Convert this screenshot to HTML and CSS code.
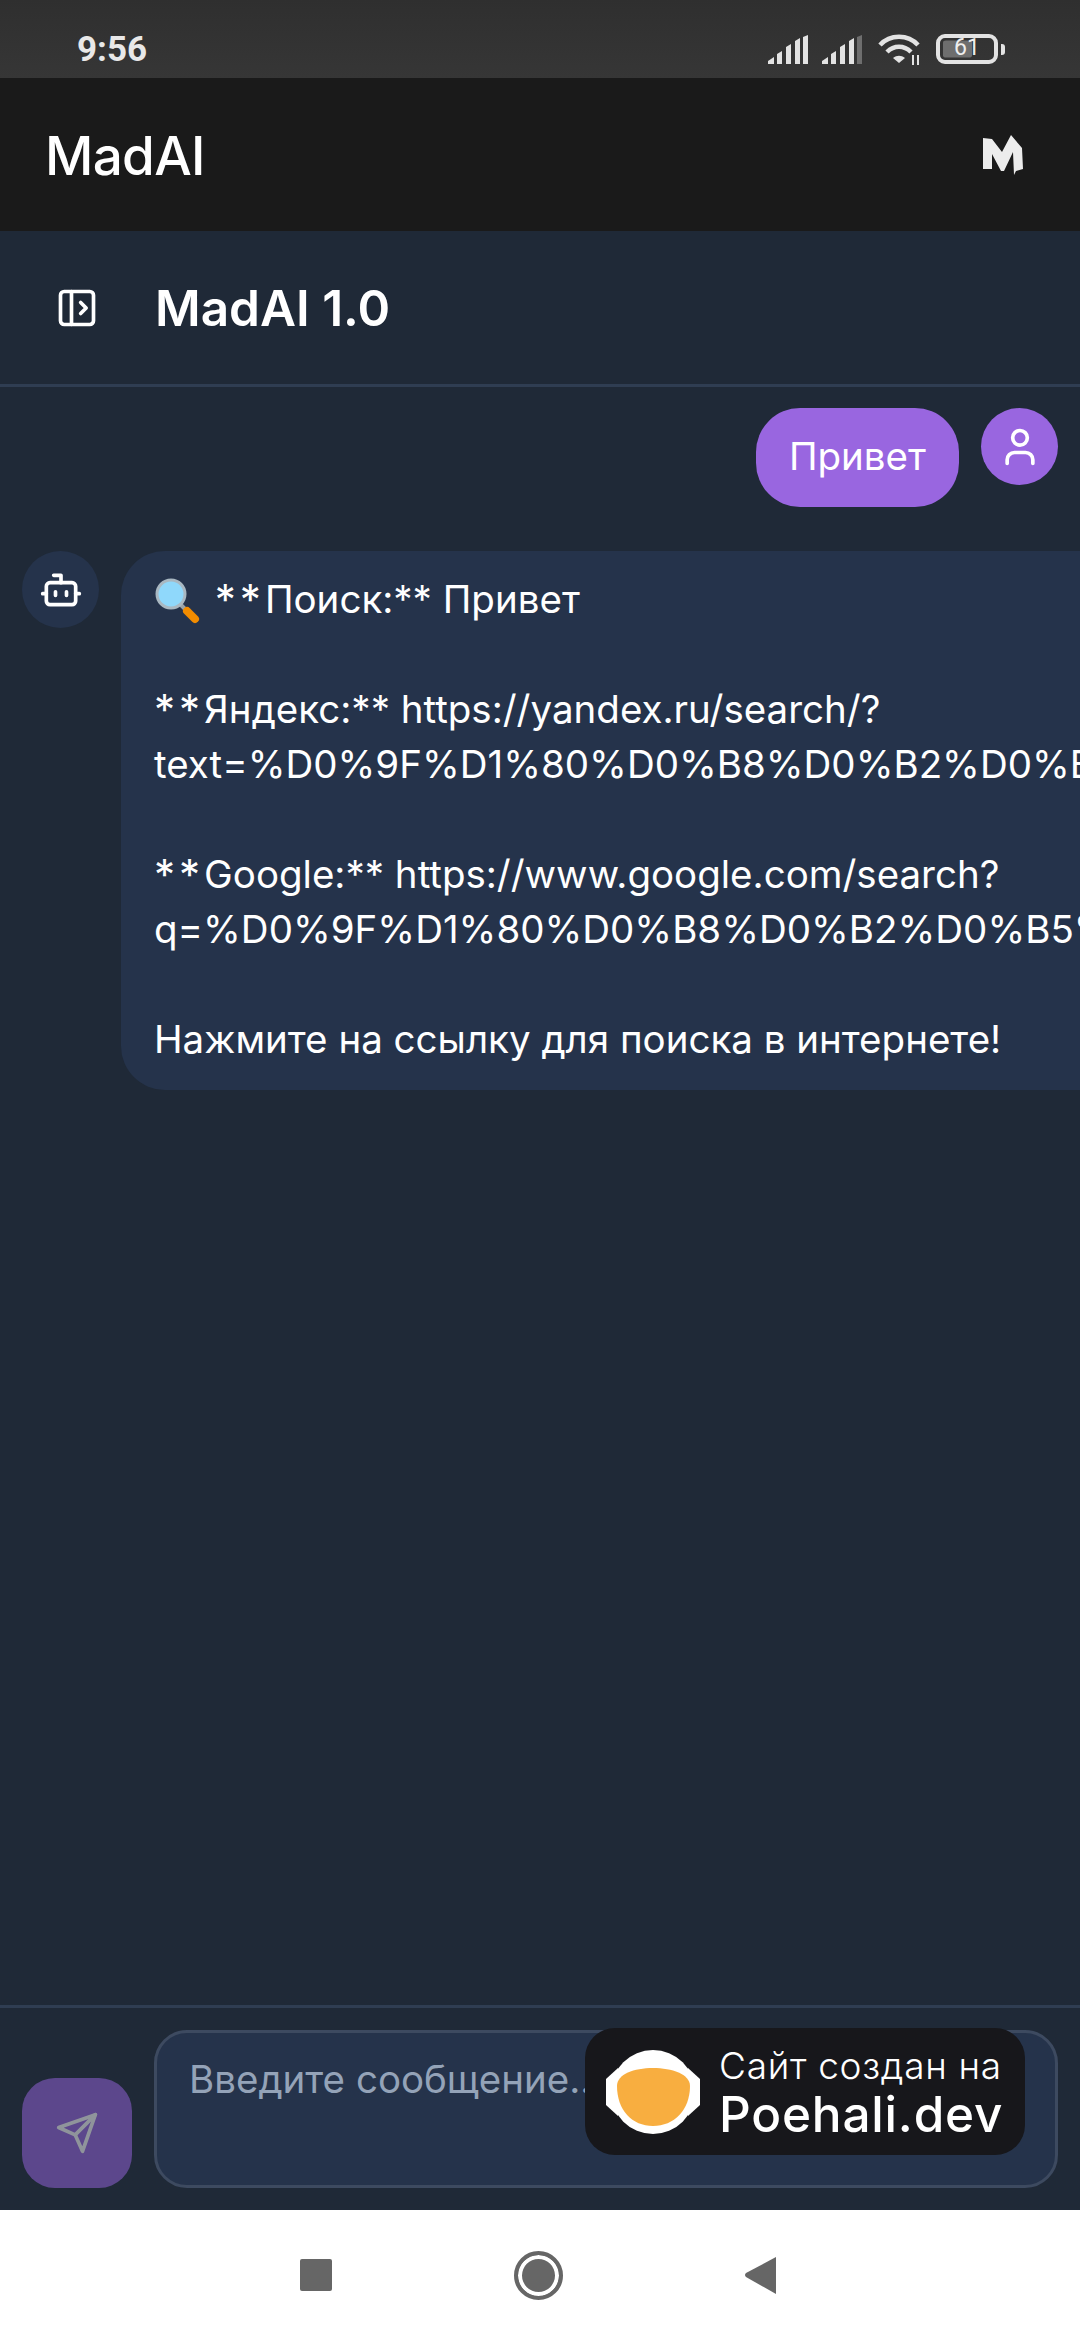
FILE: index.html
```html
<!DOCTYPE html>
<html lang="ru">

<head>
    <meta charset="UTF-8">
    <meta name="viewport" content="width=device-width, initial-scale=1.0">
    <title>MadAI</title>
    <link rel="stylesheet" href="styles.css">
</head>

<body>
    <div class="app">
        <div class="status-bar">
            <span class="clock">9:56</span>
            <div class="status-icons">
                <svg class="signal" width="40" height="29" viewBox="0 0 40 29" fill="#e3e3e3">
                    <path d="M0 29v-3l6-4v7zM9 29V19l5-3v13zM18 29V12l5-3v20zM27 29V6l5-3v26zM35 29V2l5-2v29z"/>
                </svg>
                <svg class="signal" width="40" height="29" viewBox="0 0 40 29" fill="#e3e3e3">
                    <path d="M0 29v-3l6-4v7zM9 29V19l5-3v13zM18 29V12l5-3v20zM27 29V6l5-3v26z"/>
                    <path d="M35 29V2l5-2v29z" fill="#6e6e6e"/>
                </svg>
                <svg class="wifi" width="44" height="32" viewBox="0 0 44 32" fill="none" stroke="#e3e3e3" stroke-width="4.5">
                    <path d="M2 11C12 0 30 0 40 11"/>
                    <path d="M9 18c7-7 17-7 24 0"/>
                    <path d="M21 29l-6-5c4-3 8-3 12 0z" fill="#e3e3e3" stroke="none"/>
                    <path d="M35 21v10M40 21v10" stroke-width="2"/>
                </svg>
                <div class="battery">
                    <div class="battery-body">
                        <div class="battery-level"></div>
                        <span class="battery-text">61</span>
                    </div>
                    <div class="battery-tip"></div>
                </div>
            </div>
        </div>

        <header class="app-header">
            <span class="app-name">MadAI</span>
            <svg width="40" height="40" viewBox="0 0 40 40" fill="#ececec">
                <path d="M0 3l9 1 10 13L28 0l11 13 1 21-7 2-2 4-1-23-9 19h-3L9 19v15H0z"/>
            </svg>
        </header>

        <div class="chat-header">
            <svg class="icon" viewBox="0 0 24 24" fill="none" stroke="#fff" stroke-width="2" stroke-linecap="round" stroke-linejoin="round">
                <rect x="3" y="3" width="18" height="18" rx="2"/>
                <path d="M9 3v18"/>
                <path d="m14 9 3 3-3 3"/>
            </svg>
            <h1 class="chat-title">MadAI 1.0</h1>
        </div>

        <main class="messages">
            <div class="row row-user">
                <div class="bubble bubble-user">Привет</div>
                <div class="avatar avatar-user">
                    <svg class="icon" viewBox="0 0 24 24" fill="none" stroke="#fff" stroke-width="2" stroke-linecap="round" stroke-linejoin="round">
                        <path d="M19 21v-2a4 4 0 0 0-4-4H9a4 4 0 0 0-4 4v2"/>
                        <circle cx="12" cy="7" r="4"/>
                    </svg>
                </div>
            </div>

            <div class="row">
                <div class="avatar avatar-bot">
                    <svg class="icon" viewBox="0 0 24 24" fill="none" stroke="#fff" stroke-width="2" stroke-linecap="round" stroke-linejoin="round">
                        <path d="M12 8V4H8"/>
                        <rect x="4" y="8" width="16" height="12" rx="2"/>
                        <path d="M2 14h2M20 14h2M15 13v2M9 13v2"/>
                    </svg>
                </div>
                <div class="bubble bubble-bot">
                    <div class="line">
                        <svg class="emoji" width="46" height="46" viewBox="0 0 46 46">
                            <path d="M27 27l6 6" stroke="#9aa3a8" stroke-width="4"/>
                            <path d="M33 33l8 8" stroke="#f28c00" stroke-width="8" stroke-linecap="round"/>
                            <circle cx="17" cy="16" r="14" fill="#8fd8fb" stroke="#a9b8c2" stroke-width="3"/>
                        </svg>
                        <span class="stars">**</span>Поиск:** Привет
                    </div>
                    <div class="line">&nbsp;</div>
                    <div class="line"><span class="stars">**</span>Яндекс:** https://yandex.ru/search/?</div>
                    <div class="line">text=%D0%9F%D1%80%D0%B8%D0%B2%D0%B5%D1%82</div>
                    <div class="line">&nbsp;</div>
                    <div class="line"><span class="stars">**</span>Google:** https://www.google.com/search?</div>
                    <div class="line">q=%D0%9F%D1%80%D0%B8%D0%B2%D0%B5%D1%82</div>
                    <div class="line">&nbsp;</div>
                    <div class="line">Нажмите на ссылку для поиска в интернете!</div>
                </div>
            </div>
        </main>

        <div class="composer">
            <button class="send-btn">
                <svg class="icon" viewBox="0 0 24 24" fill="none" stroke="#fff" stroke-width="2" stroke-linecap="round" stroke-linejoin="round">
                    <path d="m22 2-7 20-4-9-9-4Z"/>
                    <path d="M22 2 11 13"/>
                </svg>
            </button>
            <div class="input-box">Введите сообщение...</div>
        </div>

        <div class="nav-bar">
            <div class="nav-square"></div>
            <div class="nav-circle"></div>
            <svg width="31" height="37" viewBox="0 0 31 37" fill="#666">
                <path d="M31 0v37L1 20q-1-1-1-2t1-2z"/>
            </svg>
        </div>

        <!-- Badge over the input -->
        <div class="badge">
            <svg width="94" height="84" viewBox="0 0 94 84">
                <path d="M12 18L0 29v26l12 11z" fill="#fff"/>
                <path d="M82 18l12 11v26L82 66z" fill="#fff"/>
                <circle cx="47" cy="42" r="42" fill="#fff"/>
                <path d="M11 36C11 24 28 18 47 18s37 6 37 18C84 60 68 76 47 76S11 60 11 36z" fill="#f8ae40"/>
            </svg>
            <div class="badge-text">
                <span class="badge-small">Сайт создан на</span>
                <span class="badge-big">Poehali.dev</span>
            </div>
        </div>
    </div>
</body>

</html>
```

FILE: styles.css
```css
* {
    box-sizing: border-box;
}

html,
body {
    margin: 0;
    height: 100%;
}

body {
    font-family: 'Inter', 'Noto Sans', sans-serif;
    background-color: #1f2937;
    color: #fff;
}

.app {
    position: relative;
    display: flex;
    flex-direction: column;
    width: 1080px;
    height: 2340px;
    overflow: hidden;
}

.status-bar {
    display: flex;
    justify-content: space-between;
    align-items: center;
    height: 78px;
    padding: 20px 75px 0 77px;
    background: linear-gradient(#2f2f2f, #363636);
    color: #e8e8e8;
}

.clock {
    font-family: 'Roboto', sans-serif;
    font-size: 35px;
    font-weight: 700;
}

.status-icons {
    display: flex;
    align-items: center;
    gap: 14px;
}

.wifi {
    margin: 2px 0 0 2px;
}

.battery {
    display: flex;
    align-items: center;
    gap: 3px;
}

.battery-body {
    position: relative;
    width: 62px;
    height: 30px;
    border: 4px solid #e3e3e3;
    border-radius: 9px;
}

.battery-level {
    width: 29px;
    height: 100%;
    margin-left: 3px;
    border-radius: 3px;
    background-color: #6e6e6e;
    transform: scaleY(.78);
}

.battery-text {
    position: absolute;
    top: -4px;
    left: 14px;
    font-family: 'Roboto', sans-serif;
    font-size: 23px;
    line-height: 28px;
    color: #eee;
}

.battery-tip {
    width: 4px;
    height: 11px;
    border-radius: 0 3px 3px 0;
    background-color: #e3e3e3;
}

.app-header {
    display: flex;
    justify-content: space-between;
    align-items: center;
    height: 153px;
    padding: 0 57px 0 45px;
    background-color: #1a1a1a;
}

.app-name {
    padding-top: 3px;
    font-size: 53px;
    font-weight: 500;
    letter-spacing: -.7px;
}

.chat-header {
    display: flex;
    align-items: center;
    gap: 56px;
    height: 156px;
    padding: 0 55px;
    border-bottom: 3px solid #2f3d52;
}

.chat-title {
    margin: 0;
    font-size: 49.5px;
    font-weight: 600;
}

.icon {
    width: 44px;
    height: 44px;
}

.messages {
    flex: 1;
    display: flex;
    flex-direction: column;
    gap: 44px;
    padding: 21px 22px 0;
}

.row {
    display: flex;
    align-items: flex-start;
    gap: 22px;
}

.row-user {
    justify-content: flex-end;
}

.avatar {
    display: flex;
    justify-content: center;
    align-items: center;
    flex-shrink: 0;
    width: 77px;
    height: 77px;
    border-radius: 50%;
}

.avatar-user {
    background-color: #9966e0;
}

.avatar-bot {
    background-color: #25334b;
}

.bubble {
    flex-shrink: 0;
    padding: 21px 33px 23px;
    border-radius: 44px;
    font-size: 38.5px;
    line-height: 55px;
    white-space: nowrap;
}

.bubble-user {
    background-color: #9966e0;
}

.bubble-bot {
    min-width: 1000px;
    background-color: #25334b;
}

.emoji {
    margin-right: 4px;
    vertical-align: -11px;
}

/* leading asterisks sit wider and lower in the reference */
.stars {
    font-size: 42px;
    line-height: 0;
    letter-spacing: 4px;
    vertical-align: -2px;
}

.composer {
    display: flex;
    align-items: flex-end;
    gap: 22px;
    padding: 22px;
    border-top: 3px solid #2f3d52;
}

.send-btn {
    display: flex;
    justify-content: center;
    align-items: center;
    flex-shrink: 0;
    width: 110px;
    height: 110px;
    padding: 0;
    border: none;
    border-radius: 33px;
    background-color: #9966e0;
    opacity: .5;
}

.input-box {
    flex: 1;
    height: 158px;
    padding: 19px 32px;
    border: 3px solid #3d4a60;
    border-radius: 33px;
    background-color: #25334b;
    color: #94a3b8;
    font-size: 38.5px;
    line-height: 55px;
}

.nav-bar {
    display: flex;
    justify-content: center;
    align-items: center;
    gap: 182px;
    height: 130px;
    padding-right: 4px;
    background-color: #fff;
}

.nav-square {
    width: 32px;
    height: 32px;
    border-radius: 2px;
    background-color: #666;
}

.nav-circle {
    width: 49px;
    height: 49px;
    border: 4px solid #666;
    border-radius: 50%;
    background-color: #666;
    box-shadow: inset 0 0 0 4px #fff;
}

.badge {
    position: absolute;
    top: 2028px;
    left: 585px;
    display: flex;
    align-items: center;
    gap: 19px;
    width: 440px;
    height: 127px;
    padding-left: 21px;
    border-radius: 30px;
    background-color: #17171b;
}

.badge-text {
    display: flex;
    flex-direction: column;
}

.badge-small {
    font-size: 37px;
    font-weight: 300;
    line-height: 44px;
    letter-spacing: .7px;
}

.badge-big {
    font-size: 49.5px;
    font-weight: 500;
    line-height: 52px;
    letter-spacing: .8px;
}
```
